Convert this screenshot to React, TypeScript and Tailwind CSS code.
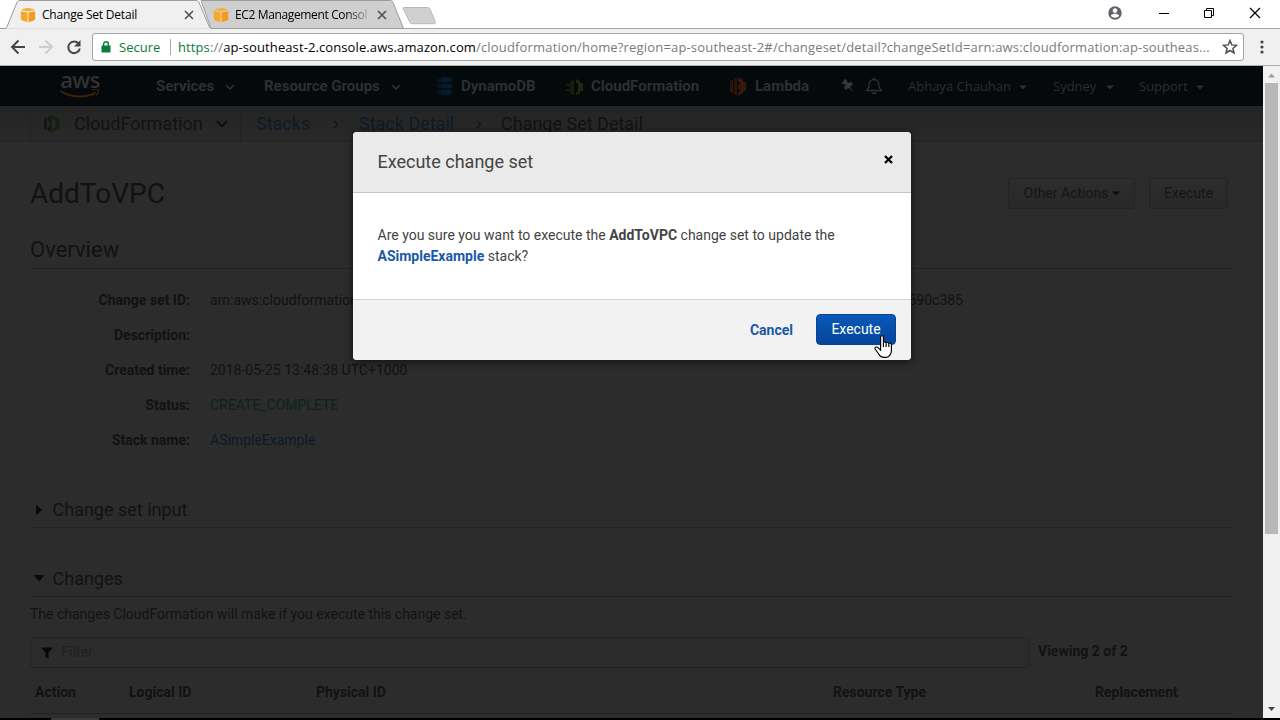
import type { ReactNode } from "react";

function CubeIcon() {
  return (
    <svg width="16" height="16" viewBox="0 0 16 16" className="shrink-0">
      <path d="M.8 4.200 7.600 5.400v9.800L2.200 13.600.8 12.600z" fill="#f7a829" />
      <path d="M15.200 4.200 8.400 5.400v9.800l5.400-1.600 1.400-1z" fill="#f59a1c" />
      <path d="M1 3.200 3.200 1.800 8 .8l4.800 1L15 3.200 8 4.500z" fill="#f9b03a" />
      <path d="M7.600 5.300h.8v9.900h-.8z" fill="#fcd596" />
    </svg>
  );
}

function CloseX({ className }: { className: string }) {
  return (
    <svg width="10" height="10" viewBox="0 0 10 10" className={className}>
      <path d="M1 1l8 8M9 1l-8 8" stroke="#505050" strokeWidth="1.600" fill="none" />
    </svg>
  );
}

function TabStrip() {
  return (
    <div className="relative flex h-[29px] bg-white font-['Open_Sans',sans-serif] text-[12px] text-black">
      <svg width="1280" height="29" viewBox="0 0 1280 29" className="absolute inset-0">
        <path d="M0 28.500h1280" stroke="#a5a5a5" />
        <path d="M201 .5H390c1.600 0 2.600.8 3.200 2.300L403.500 28.500H211z" fill="#cfcfcf" stroke="#9c9c9c" />
        <path
          d="M0 28.500h4c2 0 2.600-.6 3.200-2.300L16.800 2.800C17.400 1.200 18.200.5 20 .5h176c1.800 0 2.600.7 3.200 2.300L209 26.200c.6 1.700 1.200 2.300 3 2.300"
          fill="#f0f0f0"
          stroke="#9c9c9c"
        />
        <path d="M6 29h205" stroke="#f0f0f0" strokeWidth="1.200" />
        <path d="M404 7.500h23.500c1.400 0 2 .5 2.500 1.700l5.300 12.600c.5 1.300 0 1.900-1 1.900h-22c-1.400 0-2.100-.5-2.600-1.700l-6.300-13c-.5-1.100-.3-1.500.6-1.500z" fill="#d0d0d0" stroke="#b8b8b8" />
      </svg>
      <div className="relative flex w-[213px] items-center pl-[20px]">
        <CubeIcon />
        <span className="ml-[6px] w-[142px] tracking-[-0.2px]">Change Set Detail</span>
        <CloseX className="" />
      </div>
      <div className="relative flex items-center">
        <CubeIcon />
        <span className="ml-[6px] w-[133px] overflow-hidden bg-linear-to-r from-black from-80% to-[#b5b5b5] bg-clip-text whitespace-nowrap tracking-[-0.36px] text-transparent">
          EC2 Management Consol
        </span>
        <CloseX className="ml-[9px]" />
      </div>
      <svg width="160" height="28" viewBox="1108 0 160 28" className="relative ml-auto mr-[12px]">
        <circle cx="1115" cy="13" r="6.700" fill="#5f6368" />
        <circle cx="1115" cy="10.600" r="2.300" fill="#fff" />
        <path d="M1110.700 15.800c1-1.500 2.700-2 4.300-2s3.300.5 4.300 2c-1 1.300-2.600 2-4.300 2s-3.300-.7-4.300-2z" fill="#fff" />
        <path d="M1159 13.500h10M1204.500 10.500h7v7h-7zM1206.500 10.500v-2h7v7h-2" stroke="#000" fill="none" />
        <path d="M1250 8l10 10M1260 8l-10 10" stroke="#000" strokeWidth="1.200" />
      </svg>
    </div>
  );
}

function Toolbar() {
  return (
    <div className="flex h-[37px] items-center border-b border-[#b0b0b0] bg-[#f0f0f0] font-['Open_Sans',sans-serif] text-[13px]">
      <svg width="92" height="36" viewBox="0 29 92 36" fill="none" strokeWidth="2" className="shrink-0">
        <path d="M25 47H12.500M18.500 40.500 12 47l6.500 6.500" stroke="#454545" />
        <path d="M39 47h12.500M45.500 40.500 52 47l-6.500 6.500" stroke="#cdcdcd" />
        <path d="M78.600 43.600A5.800 5.800 0 1 0 79.800 48.500" stroke="#454545" />
        <path d="M80.500 40v6.500H74z" fill="#454545" />
      </svg>
      <div className="flex h-[28px] w-[1152px] items-center rounded-[3px] border border-[#a3a3a3] bg-white pl-[8px]">
        <svg width="10" height="12" viewBox="0 0 10 12" className="shrink-0">
          <path d="M.5 4.500h9v7h-9z" fill="#0b7a3b" />
          <path d="M2.600 5V3.200a2.400 2.400 0 0 1 4.800 0V5" stroke="#0b7a3b" strokeWidth="1.400" fill="none" />
        </svg>
        <span className="ml-[8px] w-[51px] pt-px text-[#0b7a3b]">Secure</span>
        <span className="mr-[7px] h-[16px] w-px bg-[#a8a8a8]" />
        <span className="w-[1044px] pt-px whitespace-nowrap text-[#7a7a7a]">
          <span className="tracking-[0.1px]">
            <span className="text-[#0b7a3b]">https</span>
            <span>://</span>
            <span className="text-black">ap-southeast-2.console.aws.amazon.com</span>
          </span>
          <span className="tracking-[0.172px]">
            /cloudformation/home?region=ap-southeast-2#/changeset/detail?changeSetId=arn:aws:cloudformation:ap-southeas...
          </span>
        </span>
        <svg width="16" height="16" viewBox="0 0 16 16" className="shrink-0">
          <path d="M8 1.500l1.800 4.400 4.700.4-3.600 3.100 1.100 4.600L8 11.500l-4 2.500 1.100-4.600L1.500 6.300l4.700-.4z" fill="none" stroke="#4d4d4d" strokeWidth="1.500" />
        </svg>
      </div>
      <svg width="4" height="14" viewBox="0 0 4 14" className="ml-[16px]" fill="#454545">
        <circle cx="2" cy="2" r="1.600" />
        <circle cx="2" cy="7" r="1.600" />
        <circle cx="2" cy="12" r="1.600" />
      </svg>
    </div>
  );
}

function Chevron({ className }: { className: string }) {
  return (
    <svg width="10" height="7" viewBox="0 0 10 7" className={className}>
      <path d="M1.200 1.200 5 5l3.800-3.800" fill="none" stroke="currentColor" strokeWidth="1.700" />
    </svg>
  );
}

function Caret({ className }: { className: string }) {
  return (
    <svg width="8" height="5" viewBox="0 0 8 5" className={className}>
      <path d="M0 .5h8L4 4.500z" fill="currentColor" />
    </svg>
  );
}

function NavBar() {
  return (
    <div className="flex h-[40px] items-center bg-linear-to-b from-[#04090c] to-[#05090c] font-['Roboto',sans-serif] text-[15px] font-bold text-[#2e2f30]">
      <div className="flex w-[40px] shrink-0 ml-[60px] flex-col items-center self-start pt-[3px]">
        <span className="h-[20px] font-['Open_Sans',sans-serif] text-[22px] leading-[20px] font-semibold tracking-[-0.6px] text-[#303132]">aws</span>
        <svg width="40" height="10" viewBox="0 0 40 10" fill="none">
          <path d="M.6 2c9.500 6.800 25 7.200 35.400 1.600" stroke="#3a2205" strokeWidth="2" />
          <path d="M32 .9c2.500-.7 5.200-.9 6.300-.2.400 1.500-.5 4.200-1.900 5.800" stroke="#3a2205" strokeWidth="1.300" />
        </svg>
      </div>
      <span className="ml-[56px] w-[69px]">Services</span>
      <Chevron className="mt-[2px]" />
      <span className="ml-[29px] w-[127px] whitespace-nowrap">Resource Groups</span>
      <Chevron className="mt-[2px]" />
      <svg width="18" height="20" viewBox="0 0 18 20" className="ml-[35px] shrink-0">
        <path d="M1 2.500h4v3.800H1zM1 7.800h4v4.400H1zM1 13.700h4v3.800H1z" fill="#041420" />
        <path d="M5 1h8l4 2-2 3.200H5zM5 7.800h10l2 2.200-2 2.200H5zM5 13.800h10l2 3-4 2.200H5z" fill="#051b2c" />
      </svg>
      <span className="ml-[7px] w-[105px]">DynamoDB</span>
      <svg width="18" height="18" viewBox="0 0 18 18" className="mt-px shrink-0">
        <path d="M0 6h4V4l4-3v16l-4-2v-2H0v-2h4V8H0z" fill="#151c08" />
        <path d="M10 1l4 2v2h3v8h-3v2l-4 2v-3h2V5h-2z" fill="#20270a" />
      </svg>
      <span className="ml-[7px] w-[139px]">CloudFormation</span>
      <svg width="16" height="19" viewBox="0 0 16 19" className="mt-px shrink-0">
        <path d="M0 4l3-1v13l-3-1zM4 2l3-2v19l-3-2z" fill="#2c1407" />
        <path d="M8 0l5 2.500V5h3v9h-3v2.500L8 19v-4h2v-3H8V8h2V5H8z" fill="#351a0a" />
      </svg>
      <span className="ml-[9px] w-[85px]">Lambda</span>
      <svg width="14" height="14" viewBox="0 0 14 14" className="shrink-0" fill="#363738">
        <path d="M4.200.8 5.800 0l2.100 3.700 3.500-.6 1.600 2.700-3.100 1.800 3.600 5.900-4.700-4.800L5.700 11 4.200 8.400l1.200-3L1 4.200l1.600-1z" />
      </svg>
      <svg width="18" height="18" viewBox="0 0 18 18" className="ml-[11px] shrink-0" fill="none" stroke="#2f3132" strokeWidth="1.300">
        <path d="M1.500 13.500c2-1.700 2.700-3 2.700-6C4.200 4.500 6 2.500 9 2.500s4.800 2 4.800 5c0 3 .7 4.300 2.700 6zM9 2.500V.6M7 15c.3 1.300 1 1.700 2 1.700s1.700-.4 2-1.700" />
      </svg>
      <div className="ml-[25px] flex items-center pt-[2px] font-['Open_Sans',sans-serif] text-[13px] font-normal text-[#2c2e2f]">
        <span className="w-[111px] whitespace-nowrap">Abhaya Chauhan</span>
        <Caret className="" />
        <span className="ml-[26px] w-[53px]">Sydney</span>
        <Caret className="" />
        <span className="ml-[25px] w-[57px]">Support</span>
        <Caret className="" />
      </div>
    </div>
  );
}

function CrumbArrow({ className }: { className: string }) {
  return (
    <svg width="6" height="9" viewBox="0 0 6 9" className={className}>
      <path d="M1 1l3.500 3.500L1 8" fill="none" stroke="#121212" strokeWidth="1.300" />
    </svg>
  );
}

function Breadcrumbs() {
  return (
    <div className="flex h-[36px] items-center border-b border-[#252525] bg-linear-to-b from-[#242424] to-[#292929] text-[18px] whitespace-nowrap">
      <span className="ml-[30px] h-full w-px bg-[#222]" />
      <svg width="16" height="18" viewBox="0 0 16 18" className="ml-[13px] shrink-0">
        <path d="M0 4l3-1.500V15L0 13.500zM3.800 2.500 7.500.5v17l-3.700-2V12l2-.5V6l-2-.5z" fill="#101a0c" />
        <path d="M8.500.5l4 2 3 1.500v9.500l-3 1.500-4 2.500v-4l3-1V5l-3-1z" fill="#15200f" />
      </svg>
      <span className="ml-[14px] w-[142px] text-[#121212]">CloudFormation</span>
      <svg width="12" height="8" viewBox="0 0 12 8" className="mt-px">
        <path d="M1 1.200l5 5 5-5" fill="none" stroke="#0e0e0e" strokeWidth="2" />
      </svg>
      <span className="ml-[12px] h-full w-px bg-[#222]" />
      <span className="ml-[15px] w-[77px] text-[#0d1a29]">Stacks</span>
      <CrumbArrow className="mt-[2px]" />
      <span className="ml-[20px] w-[117px] text-[#0d1a29]">Stack Detail</span>
      <CrumbArrow className="mt-[2px]" />
      <span className="ml-[19px] text-[#121212]">Change Set Detail</span>
    </div>
  );
}

function DetailRow({ label, children }: { label: string; children?: ReactNode }) {
  return (
    <div className="flex h-[35px] items-center">
      <span className="w-[160px] text-right font-bold">{label}</span>
      <span className="ml-[20px]">{children}</span>
    </div>
  );
}

function ActionButton({ className, children }: { className: string; children: ReactNode }) {
  return (
    <button
      className={`flex h-[31px] items-center justify-center rounded-[3px] border border-[#232323] bg-linear-to-b from-[#2d2d2d] to-[#282828] text-[14px] text-[#151515] ${className}`}
    >
      {children}
    </button>
  );
}

function PageBody() {
  return (
    <div className="flex flex-1 flex-col pr-[31px] pl-[30px] text-[14px] text-[#121212]">
      <div className="mt-[24px] flex h-[54px] items-center">
        <h1 className="pt-[2px] text-[28px] leading-[32px]">AddToVPC</h1>
        <ActionButton className="ml-auto w-[127px] pl-px">
          Other Actions
          <Caret className="ml-[4px] text-[#0b0b0b]" />
        </ActionButton>
        <ActionButton className="mr-[4px] ml-[14px] w-[79px]">Execute</ActionButton>
      </div>
      <h2 className="flex h-[49px] items-center border-b border-[#242424] pt-[10px] text-[22px]">Overview</h2>
      <div className="mt-[14px]">
        <DetailRow label="Change set ID:">
          <span className="flex w-[753px] justify-between">
            <span>arn:aws:cloudformation</span>
            <span>590c385</span>
          </span>
        </DetailRow>
        <DetailRow label="Description:" />
        <DetailRow label="Created time:">2018-05-25 13:48:38 UTC+1000</DetailRow>
        <DetailRow label="Status:">
          <span className="text-[#0b231a]">CREATE_COMPLETE</span>
        </DetailRow>
        <DetailRow label="Stack name:">
          <span className="text-[#0d1a29]">ASimpleExample</span>
        </DetailRow>
      </div>
      <div className="mt-[34px] flex h-[36px] items-center border-b border-[#242424] text-[18px]">
        <svg width="6" height="12" viewBox="0 0 6 12" className="ml-[6px]">
          <path d="M0 .5 6 6l-6 5.500z" fill="#0b0b0b" />
        </svg>
        <span className="ml-[10.500px]">Change set input</span>
      </div>
      <div className="mt-[33px] flex h-[36px] items-center border-b border-[#242424] text-[18px]">
        <svg width="12" height="7" viewBox="0 0 12 7" className="ml-[3px]">
          <path d="M.5 0h11L6 6.500z" fill="#0b0b0b" />
        </svg>
        <span className="ml-[7.500px]">Changes</span>
      </div>
      <p className="flex h-[35px] items-center">The changes CloudFormation will make if you execute this change set.</p>
      <div className="mt-[5px] flex h-[31px] items-center">
        <div className="flex h-[31px] w-[999px] items-center rounded-[3px] border border-[#242424] pl-[10px] text-[#202020]">
          <svg width="12" height="12" viewBox="0 0 12 12">
            <path d="M.3.500h11.400L7.500 5.500V11.500l-3-1.500V5.500z" fill="#080808" />
          </svg>
          <span className="ml-[8.500px]">Filter</span>
        </div>
        <span className="ml-[9px] pb-[3px] font-bold">Viewing 2 of 2</span>
      </div>
      <div className="flex h-[46px] items-center border-b border-[#242424] pt-[3px] pl-[5px] font-bold">
        <span className="w-[94px]">Action</span>
        <span className="w-[187px]">Logical ID</span>
        <span className="w-[517px]">Physical ID</span>
        <span className="w-[262px]">Resource Type</span>
        <span>Replacement</span>
      </div>
    </div>
  );
}

function Scrollbar() {
  return (
    <div className="flex w-[17px] flex-col items-center bg-[#f1f1f1] pr-px">
      <svg width="9" height="17" viewBox="0 0 9 17">
        <path d="M1 11.500h7L4.500 7.500z" fill="#a0a0a0" />
      </svg>
      <div className="h-[451px] w-[13px] bg-[#b8b8b8]" />
      <svg width="9" height="17" viewBox="0 0 9 17" className="mt-auto">
        <path d="M1 6h7L4.500 10z" fill="#444" />
      </svg>
    </div>
  );
}

function HandCursor() {
  return (
    <svg width="19" height="24" viewBox="0 0 18 23" className="absolute top-[203px] left-[521px]">
      <path
        d="M6.200 2.200c0-2 2.700-2 2.700 0v5.300c0-1.200 2.600-1.200 2.600.5 0-1.200 2.600-1.100 2.600.6 0-1 2.500-1 2.500.8v5.800c0 2.700-2.100 6.300-5 6.300H9.200c-2.400 0-3.800-1.500-4.800-3.300L1 13.400c-.8-1.500 1.300-2.600 2.700-1.300l2.500 2.400z"
        fill="#fff"
        stroke="#000"
        strokeWidth="1.100"
      />
      <path d="M8.900 7.500v4M11.500 8v3.500M14.100 8.600v3" stroke="#000" strokeWidth="1.100" />
    </svg>
  );
}

function ExecuteDialog() {
  return (
    <div
      role="dialog"
      className="absolute top-[66px] left-[353px] flex h-[228px] w-[558px] flex-col rounded-[4px] bg-white text-[14px] text-[#444] shadow-[0_2px_8px_rgba(0,0,0,0.6)]"
    >
      <div className="flex h-[61px] items-center rounded-t-[4px] border-b border-[#c4c4c4] bg-[#eaeaea] pr-[18px] pl-[24.500px]">
        <span className="pb-[2px] text-[18px]">Execute change set</span>
        <svg width="9" height="9" viewBox="0 0 9 9" className="mb-[6px] ml-auto">
          <path d="M1 1l7 7M8 1 1 8" stroke="#000" strokeWidth="2.300" />
        </svg>
      </div>
      <p className="h-[106px] pt-[32px] pl-[24.500px] leading-[21px]">
        Are you sure you want to execute the <b>AddToVPC</b> change set to update the
        <br />
        <b className="text-[#1b58a8]">ASimpleExample</b> stack?
      </p>
      <div className="flex flex-1 items-center justify-end rounded-b-[4px] border-t border-[#d2d2d2] bg-[#f2f2f2] pr-[15px]">
        <span className="font-bold text-[#1b58a8]">Cancel</span>
        <button className="mb-[2px] ml-[23px] h-[31px] w-[80px] rounded-[4px] border border-[#04459a] bg-linear-to-b from-[#0a58b8] to-[#05469a] pt-px text-white">
          Execute
        </button>
      </div>
      <HandCursor />
    </div>
  );
}

export default function App() {
  return (
    <div className="flex h-[720px] w-[1280px] flex-col overflow-hidden bg-black">
      <TabStrip />
      <Toolbar />
      <div className="flex h-[652px]">
        <div className="relative flex w-[1263px] flex-col bg-[#2c2c2c] font-['Roboto',sans-serif]">
          <NavBar />
          <Breadcrumbs />
          <PageBody />
          <ExecuteDialog />
        </div>
        <Scrollbar />
      </div>
      <div className="ml-[51px] h-[2px] w-[48px] bg-[#3a3a3a]" />
    </div>
  );
}
